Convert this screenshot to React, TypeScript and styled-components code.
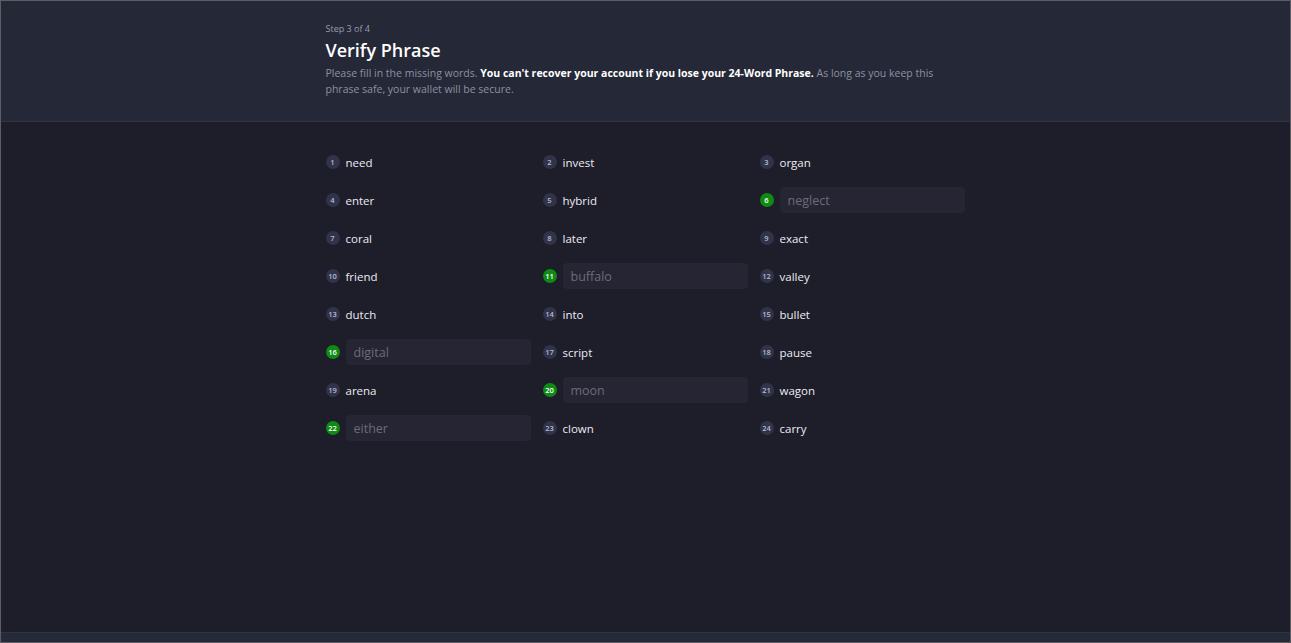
import React from "react";
import styled, { createGlobalStyle } from "styled-components";

const Global = createGlobalStyle`
  html, body { margin: 0; padding: 0; height: 100%; }
  body { background: #1e1d2a; font-family: "Open Sans", "Noto Sans", sans-serif; }
  #root { height: 100%; }
  * { box-sizing: border-box; }
`;

const Frame = styled.div`
  height: 643px;
  border: 1px solid #5e5e62;
  display: flex;
  flex-direction: column;
  background: #1e1d2a;
`;

const Header = styled.header`
  background: #252836;
  border-bottom: 1px solid #30334a;
  height: 121px;
  flex: none;
`;

const Inner = styled.div`
  width: 640px;
  margin: 0 auto;
`;

const HeaderInner = styled(Inner)`
  padding-top: 21px;
`;

const Step = styled.div`
  font-size: 9px;
  color: #9a9cae;
  line-height: 14px;
`;

const Title = styled.h1`
  margin: 2px 0 0;
  font-size: 18px;
  font-weight: 600;
  color: #ffffff;
  line-height: 24px;
`;

const Desc = styled.p`
  margin: 3px 0 0;
  font-size: 10.5px;
  line-height: 16px;
  color: #8e90a4;
`;

const Strong = styled.strong`
  color: #ffffff;
  font-weight: 700;
`;

const Body = styled.main`
  flex: 1;
  padding-top: 27px;
`;

const Grid = styled(Inner)`
  display: grid;
  grid-template-columns: repeat(3, 205px);
  column-gap: 12px;
  row-gap: 12px;
`;

const Cell = styled.div`
  display: flex;
  align-items: center;
  gap: 6px;
  height: 26px;
`;

const Badge = styled.span<{ $ok?: boolean }>`
  width: 14px;
  height: 14px;
  border-radius: 50%;
  flex: none;
  background: ${(p) => (p.$ok ? "#0f8a14" : "#30334a")};
  color: ${(p) => (p.$ok ? "#ffffff" : "#b8bbcc")};
  font-size: 7.5px;
  font-weight: 600;
  display: flex;
  align-items: center;
  justify-content: center;
`;

const Word = styled.span`
  color: #ececf2;
  font-size: 11.5px;
  font-weight: 500;
`;

const Field = styled.input`
  flex: 1;
  min-width: 0;
  height: 26px;
  border: none;
  outline: none;
  border-radius: 4px;
  background: #252533;
  color: #ececf2;
  font-family: inherit;
  font-size: 12.5px;
  padding: 0 8px;
  &::placeholder { color: #6c6c7a; }
`;

const Footer = styled.footer`
  height: 10px;
  flex: none;
  background: #252a38;
  border-top: 1px solid #2f3349;
`;

const words = [
  "need", "invest", "organ", "enter", "hybrid", "neglect", "coral", "later", "exact",
  "friend", "buffalo", "valley", "dutch", "into", "bullet", "digital", "script", "pause",
  "arena", "moon", "wagon", "either", "clown", "carry",
];
const missing = new Set([6, 11, 16, 20, 22]);

export default function App() {
  return (
    <>
      <Global />
      <Frame>
        <Header>
          <HeaderInner>
            <Step>Step 3 of 4</Step>
            <Title>Verify Phrase</Title>
            <Desc>
              Please fill in the missing words. <Strong>You can't recover your account if you lose your 24-Word Phrase.</Strong> As long as you keep this phrase safe, your wallet will be secure.
            </Desc>
          </HeaderInner>
        </Header>
        <Body>
          <Grid>
            {words.map((w, i) => {
              const n = i + 1;
              const m = missing.has(n);
              return (
                <Cell key={n}>
                  <Badge $ok={m}>{n}</Badge>
                  {m ? <Field placeholder={w} /> : <Word>{w}</Word>}
                </Cell>
              );
            })}
          </Grid>
        </Body>
        <Footer />
      </Frame>
    </>
  );
}
